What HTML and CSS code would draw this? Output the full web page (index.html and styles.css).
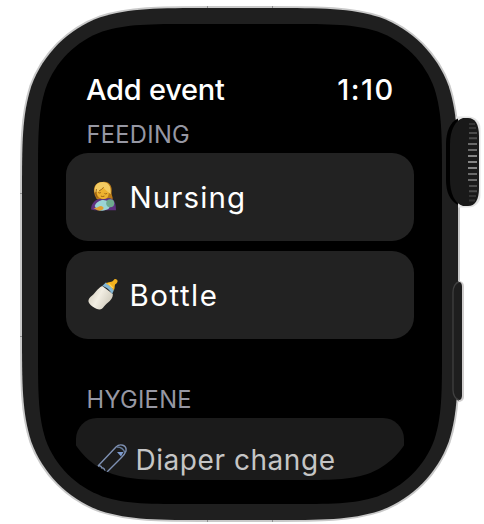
FILE: index.html
```
<!DOCTYPE html>
<html lang="en">
<head>
<meta charset="utf-8">
<title>Add event</title>
<link rel="stylesheet" href="styles.css">
</head>
<body>
<div class="watch">
  <svg class="case" viewBox="0 0 484 524" aria-hidden="true">
    <defs>
      <path id="shell" d="M211.6 8H268.4C323 8 350.3 8 379.7 17.3C411.8 29 437 54.200 448.7 86.300C458 115.7 458 143 458 197.6V330.4C458 385 458 412.3 448.7 441.7C437 473.800 411.8 499 379.7 510.7C350.3 520 323 520 268.4 520H211.6C157 520 129.7 520 100.3 510.7C68.2 499 43 473.8 31.3 441.7C22 412.3 22 385 22 330.4V197.6C22 143 22 115.7 31.3 86.3C43 54.2 68.2 29 100.3 17.3C129.7 8 157 8 211.6 8Z"/>
    </defs>
    <use href="#shell" fill="#c9c9c9" stroke="#c9c9c9" stroke-width="4"/>
    <path d="M207.5 6v2M272.5 6v2M207.5 520v2M272.5 520v2M20 193.500h2M20 336.500h2" stroke="#8f8f8f"/>
    <rect x="445" y="116.500" width="35.500" height="91" rx="12" fill="#e3e3e3"/>
    <rect x="452" y="281" width="12" height="121" rx="5" fill="#cfcdcd"/>
    <use href="#shell" fill="#1f1f1f"/>
    <path fill="#000" d="M193.900 24H286.100C331 24 353.400 24 377.600 31.600C404 41.200 424.800 62 434.400 88.400C442 112.600 442 135 442 179.900V348.100C442 393 442 415.400 434.400 439.600C424.800 466 404 486.800 377.600 496.400C353.400 504 331 504 286.100 504H193.900C149 504 126.600 504 102.400 496.400C76 486.800 55.200 466 45.600 439.600C38 415.400 38 393 38 348.100V179.900C38 135 38 112.600 45.600 88.400C55.200 62 76 41.200 102.400 31.600C126.600 24 149 24 193.900 24Z"/>
    <path fill="#000" d="M458 118.500C450 122 446 132 446 144V180C446 192 450 201 458 205Z"/>
    <path fill="#191919" d="M463 118H468C475 118 479 124 479 136V188C479 200 475 206 468 206H463C455 204 450 193 450 180V144C450 131 455 120 463 118Z"/>
    <g stroke-width="2">
      <path d="M469 124h6M469 128h7M469 196h7M469 200.500h6" stroke="#343434"/>
      <path d="M469 133h8M469 138.300h8M469 186h8M469 191.200h8" stroke="#4b4b4b"/>
      <path d="M468 144h9M468 150h9M468 174h9M468 180h9" stroke="#696969"/>
      <path d="M468 156h9M468 162h9M468 168h9" stroke="#858585"/>
    </g>
    <path d="M459 282C455.500 282.500 453 287 453 292V390C453 395 455.500 399.500 459 400Q462 400 462 395V287Q462 282 459 282Z" fill="#1e1e1e"/>
    <path d="M459 282C455.500 282.500 453 287 453 292V390C453 395 455.500 399.500 459 400" fill="none" stroke="#404040" stroke-width="1.300"/>
  </svg>

  <main class="screen">
    <header class="bar"><h1 class="title">Add event</h1><time class="clock">1:10</time></header>
    <section>
      <h2 class="label label-feeding">FEEDING</h2>
      <div class="card">
        <svg class="icon" viewBox="-1.500 0 36 36" aria-hidden="true">
          <path d="M8 20C2 9 6 1 15 1C24 0 26 8 25 13C25 17 27 18 26 22L20 25L10 21Z" fill="#b87a18"/>
          <path d="M8 11C10 5 21 4 22 12C22 18 19 22 14 20C10 19 8 16 8 11Z" fill="#eeb230"/>
          <path d="M6 13C10 12 14 10 16 7C18 11 22 12 24 15C25 5 21 1 15 1C8 1 5 6 6 13Z" fill="#f3cb62"/>
          <path d="M2 32C2 26 6 21 12 20C17 22 21 17 25 20C29 22 30 27 30 33H6Z" fill="#5f3180"/>
          <path d="M6 28C8 23 14 20 19 22L25 25L22 31C16 35 8 34 6 28Z" fill="#9bd4d6"/>
          <circle cx="23.500" cy="25" r="4.500" fill="#6dab8e"/>
          <path d="M4 30C9 32 12 26 15 29C18 31 14 34 9 33Z" fill="#e0a032"/>
          <path d="M10 13q2 1 3 0M17 14q1 1 3 0M13 17q2 1 4 0M8 9q-2 5 1 10M16 7q-2 3-5 4" fill="none" stroke="#915c14" stroke-width="1"/>
        </svg>
        <span class="name nursing">Nursing</span>
      </div>
      <div class="card">
        <svg class="icon" viewBox="0 0 36 36" aria-hidden="true">
          <defs><linearGradient id="milk" x1="0" y1=".3" x2="1" y2=".8"><stop stop-color="#d5cfc0"/><stop offset=".4" stop-color="#f2eee3"/><stop offset="1" stop-color="#c9c4b5"/></linearGradient></defs>
          <path d="M16 8L28 17C28 24 22 26 18 31C15 36 11 35 5 31C0 27 -1 24 3 20C8 17 10 11 16 8Z" fill="url(#milk)"/>
          <path d="M16 8L20 4C24 5 28 9 29 13L27 17C25 13 21 9 16 8Z" fill="#83b6d4"/>
          <path d="M20 5C23 3 27 4 29 1Q30-1 33 1Q34 3 32 5C29 6 31 9 29 13C27 9 24 7 20 5Z" fill="#f3b21d"/>
          <path d="M23 5L28 10" stroke="#ffd45a" stroke-width="1.500"/>
        </svg>
        <span class="name bottle">Bottle</span>
      </div>
    </section>
    <section>
      <h2 class="label label-hygiene">HYGIENE</h2>
      <div class="card card-last">
        <svg class="pin" viewBox="0 0 34 34" aria-hidden="true">
          <g fill="none" stroke="#7e90b2" stroke-width="1.400" stroke-linejoin="round">
            <path d="M1 24L19 5C23 1 30 3 29 9C28 12 26 14 24 16L8 32"/>
            <path d="M1 24Q4 23 5 26Q8 25 8 32"/>
            <path d="M20 5Q26 5 28 11" stroke="#637896"/>
          </g>
          <path d="M20 10L26.500 10L24 14.500Z" fill="#7c9bd0"/>
        </svg>
        <span class="name diaper">Diaper change</span>
      </div>
    </section>
  </main>
</div>
</body>
</html>
```
FILE: styles.css
```
body {
  margin: 0;
  background: #fff;
  font-family: Inter, "Liberation Sans", sans-serif;
  overflow: hidden;
}
.watch {
  position: relative;
  width: 484px;
  height: 524px;
}
.case {
  position: absolute;
  inset: 0;
  width: 484px;
  height: 524px;
}
.screen {
  position: relative;
  box-sizing: border-box;
  width: 414px;
  padding: 72px 0 0 66px;
}
.bar {
  display: flex;
  justify-content: space-between;
  height: 36px;
  padding: 0 19.5px 0 20px;
  line-height: 36px;
  color: #fff;
}
.title, .clock {
  margin: 0;
  font-size: 29px;
  font-weight: 500;
  white-space: nowrap;
}
.title { letter-spacing: -0.25px; }
.clock { letter-spacing: 1.4px; }
.label {
  margin: 0;
  padding-left: 20.5px;
  font-size: 23.700px;
  font-weight: 400;
  line-height: 30px;
  letter-spacing: 0.3px;
  color: #9697a3;
}
.label-feeding {
  margin: 12px 0 3px;
}
.label-feeding + .card { margin-bottom: 10px; }
.card {
  display: flex;
  align-items: center;
  box-sizing: border-box;
  height: 88px;
  padding-left: 22px;
  border-radius: 22px;
  background: #222;
}
.icon {
  flex: none;
  width: 32px;
  height: 32px;
  margin-right: 9.5px;
  overflow: visible;
}
.name {
  font-size: 29.500px;
  line-height: 36px;
  color: #fff;
  white-space: nowrap;
}
.nursing { letter-spacing: 1.1px; }
.bottle { letter-spacing: 1.5px; }
.label-hygiene {
  margin: 46px 0 3px;
}
.card-last {
  height: 62px;
  margin: 0 10px;
  padding: 24px 0 0 21px;
  align-items: flex-start;
  background: #1b1b1b;
  border-radius: 21px 21px 0 0;
  clip-path: path("M-14 -80H342V-60.3C342 -25.1 342 -7.5 336 11.5C328.5 32.2 312.2 48.5 291.5 56C272.5 62 254.9 62 219.7 62H108.3C73.1 62 55.5 62 36.5 56C15.8 48.5 -0.5 32.2 -8 11.5C-14 -7.5 -14 -25.1 -14 -60.3Z");
}
.pin {
  flex: none;
  width: 34px;
  height: 34px;
  margin-right: 4.5px;
}
.diaper {
  font-size: 28px;
  letter-spacing: 0.55px;
  color: #c5c5c5;
}
```
